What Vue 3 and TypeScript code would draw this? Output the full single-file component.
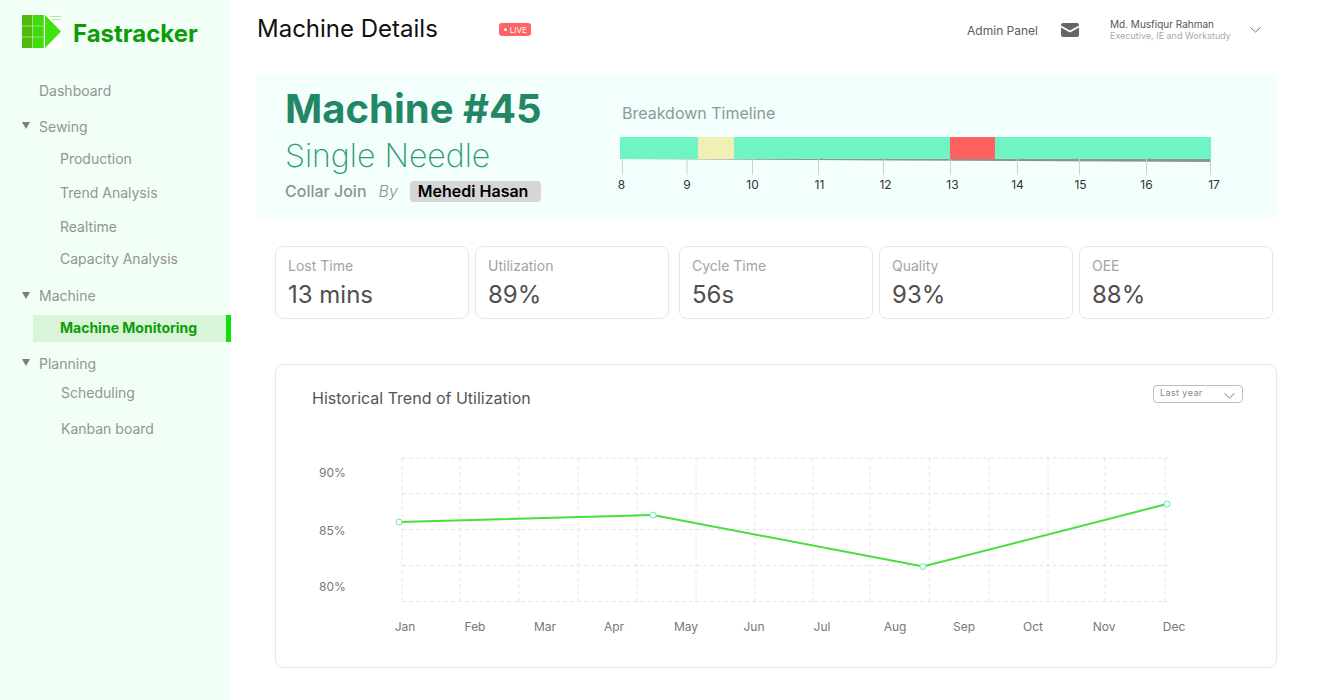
<script setup lang="ts">
interface NavItem { label: string; kind: 'top' | 'group' | 'sub' | 'active'; height: number; shift?: number }
const nav: NavItem[] = [
  { label: 'Dashboard', kind: 'top', height: 36 },
  { label: 'Sewing', kind: 'group', height: 36 },
  { label: 'Production', kind: 'sub', height: 28 },
  { label: 'Trend Analysis', kind: 'sub', height: 40 },
  { label: 'Realtime', kind: 'sub', height: 28 },
  { label: 'Capacity Analysis', kind: 'sub', height: 36 },
  { label: 'Machine', kind: 'group', height: 39 },
  { label: 'Machine Monitoring', kind: 'active', height: 27 },
  { label: 'Planning', kind: 'group', height: 42 },
  { label: 'Scheduling', kind: 'sub', height: 16, shift: 1 },
  { label: 'Kanban board', kind: 'sub', height: 56, shift: 1 },
]
const cards = [
  { label: 'Lost Time', value: '13 mins', gap: 0 },
  { label: 'Utilization', value: '89%', gap: 6 },
  { label: 'Cycle Time', value: '56s', gap: 10 },
  { label: 'Quality', value: '93%', gap: 6 },
  { label: 'OEE', value: '88%', gap: 6 },
]
const hours = [
  { h: 8, tick: 622.5, text: 621.5 }, { h: 9, tick: 687, text: 687 }, { h: 10, tick: 752.5, text: 752.5 },
  { h: 11, tick: 818.5, text: 819.5 }, { h: 12, tick: 883.5, text: 885.5 }, { h: 13, tick: 950.5, text: 952.5 },
  { h: 14, tick: 1017.5, text: 1017.5 }, { h: 15, tick: 1079.5, text: 1080.5 }, { h: 16, tick: 1146.5, text: 1146.5 },
  { h: 17, tick: 1210.5, text: 1214 },
]
const segments = [
  { x: 620, w: 78, c: '#6ff5c3' }, { x: 698, w: 36, c: '#f0f0b4' }, { x: 734, w: 216, c: '#6ff5c3' },
  { x: 950, w: 45, c: '#ff6060' }, { x: 995, w: 216, c: '#6ff5c3' },
]
const vLines = [402, 460, 519, 578, 637, 696, 755, 813, 870, 929.5, 989, 1048, 1105, 1165]
const hLines = [458, 493.5, 529.5, 565.5, 601.5]
const yLabels = [{ t: '90%', y: 472 }, { t: '85%', y: 530 }, { t: '80%', y: 586 }]
const xLabels = [
  ['Jan', 405], ['Feb', 475], ['Mar', 545], ['Apr', 614], ['May', 686], ['Jun', 754],
  ['Jul', 822], ['Aug', 895], ['Sep', 964], ['Oct', 1033], ['Nov', 1104], ['Dec', 1174],
] as const
const points = [[399, 522], [653, 515], [923, 566.5], [1167, 504]]
const polyline = points.map((p) => p.join(',')).join(' ')
</script>

<template>
  <div class="page">
    <aside class="sidebar">
      <div class="brand">
        <svg class="logo" width="40" height="34" viewBox="0 0 40 34">
          <rect x="0" y="0" width="39" height="33" fill="#ffffff" />
          <rect x="0" y="0" width="22" height="33" fill="#9fe37f" />
          <rect x="0" y="0" width="10" height="10.5" fill="#4fb90f" />
          <rect x="0" y="11.5" width="10" height="10" fill="#4fb90f" />
          <rect x="0" y="22.5" width="10" height="10.5" fill="#4fb90f" />
          <rect x="11" y="0" width="10.5" height="10.5" fill="#3fdb0b" />
          <rect x="11" y="11.5" width="10.5" height="10" fill="#3fdb0b" />
          <rect x="11" y="22.5" width="10.5" height="10.5" fill="#3fdb0b" />
          <path d="M23 0 L39 16.5 L23 33 Z" fill="#3fe30d" />
          <rect x="28" y="1" width="11" height="1" fill="#b5e6a5" />
          <rect x="30" y="4" width="9" height="1" fill="#b5e6a5" />
        </svg>
        <span class="brand-name">Fastracker</span>
      </div>
      <nav class="nav">
        <div
          v-for="item in nav"
          :key="item.label"
          class="nav-row"
          :class="item.kind"
          :style="{ height: item.height + 'px', paddingLeft: item.shift ? 61 + 'px' : undefined }"
        >
          <svg v-if="item.kind === 'group'" class="caret" width="8" height="7" viewBox="0 0 8 7">
            <path d="M0 0 H8 L4 7 Z" fill="#7d7d7d" />
          </svg>
          <span>{{ item.label }}</span>
        </div>
      </nav>
    </aside>

    <main class="main">
      <header class="topbar">
        <div class="title-wrap">
          <h1 class="title">Machine Details</h1>
          <span class="live"><i class="live-dot"></i>LIVE</span>
        </div>
        <div class="account">
          <span class="admin">Admin Panel</span>
          <svg class="mail" width="18" height="14" viewBox="0 0 18 14">
            <path d="M2 0 H16 A2 2 0 0 1 18 2 V2.6 L9 7.4 L0 2.6 V2 A2 2 0 0 1 2 0 Z" fill="#666" />
            <path d="M0 4.6 L9 9.4 L18 4.6 V12 A2 2 0 0 1 16 14 H2 A2 2 0 0 1 0 12 Z" fill="#666" />
          </svg>
          <div class="user">
            <div class="user-name">Md. Musfiqur Rahman</div>
            <div class="user-role">Executive, IE and Workstudy</div>
          </div>
          <svg class="chev" width="11" height="6" viewBox="0 0 11 6">
            <path d="M0.5 0.5 L5.5 5 L10.5 0.5" fill="none" stroke="#777" stroke-width="1" />
          </svg>
        </div>
      </header>

      <section class="hero">
        <div class="hero-info">
          <div class="machine">Machine #45</div>
          <div class="needle">Single Needle</div>
          <div class="meta">
            <span class="join">Collar Join</span>
            <span class="by">By</span>
            <span class="person">Mehedi Hasan</span>
          </div>
        </div>
        <div class="timeline">
          <div class="timeline-title">Breakdown Timeline</div>
          <svg class="timeline-svg" width="620" height="62" viewBox="612 135 620 62">
            <path d="M620 159 L1211 159 L1211 162 L900 160.5 Z" fill="#909090" />
            <rect v-for="s in segments" :key="s.x" :x="s.x" y="137" :width="s.w" height="22" :fill="s.c" />
            <line v-for="t in hours" :key="t.h" :x1="t.tick" :x2="t.tick" y1="159" y2="175" stroke="#cfcfcf" stroke-width="1" />
            <text v-for="t in hours" :key="'l' + t.h" class="hour" :x="t.text" y="189" text-anchor="middle">{{ t.h }}</text>
          </svg>
        </div>
      </section>

      <section class="cards">
        <div v-for="c in cards" :key="c.label" class="card" :style="{ marginLeft: c.gap + 'px' }">
          <div class="card-label">{{ c.label }}</div>
          <div class="card-value">{{ c.value }}</div>
        </div>
      </section>

      <section class="chart-card">
        <div class="chart-head">
          <h2 class="chart-title">Historical Trend of Utilization</h2>
          <div class="select">
            <span class="select-text">Last year</span>
            <svg width="11" height="6" viewBox="0 0 11 6">
              <path d="M0.5 0.5 L5.5 5 L10.5 0.5" fill="none" stroke="#777" stroke-width="1" />
            </svg>
          </div>
        </div>
        <svg class="chart" width="1000" height="240" viewBox="276 425 1000 240">
          <line v-for="x in vLines" :key="x" :x1="x" :x2="x" y1="458" y2="602" class="grid" />
          <line v-for="y in hLines" :key="y" x1="402" x2="1168" :y1="y" :y2="y" class="grid" />
          <text v-for="l in yLabels" :key="l.t" class="axis" x="319" :y="l.y + 5">{{ l.t }}</text>
          <text v-for="l in xLabels" :key="l[0]" class="axis" :x="l[1]" y="631" text-anchor="middle">{{ l[0] }}</text>
          <polyline :points="polyline" fill="none" stroke="#46df3c" stroke-width="2" />
          <circle v-for="p in points" :key="p[0]" :cx="p[0]" :cy="p[1]" r="3" fill="#ffffff" stroke="#6be8b5" stroke-width="1" />
        </svg>
      </section>
    </main>
  </div>
</template>

<style scoped>
.page {
  display: flex;
  width: 1334px;
  height: 700px;
  overflow: hidden;
  background: #fff;
  font-family: Inter, "Liberation Sans", sans-serif;
}
.sidebar {
  width: 230px;
  flex: none;
  background: #f1fff6;
}
.brand {
  display: flex;
  align-items: center;
  height: 33px;
  margin: 15px 0 0 22px;
}
.logo { flex: none; }
.brand-name {
  margin: 4px 0 0 11px;
  font-size: 24px;
  font-weight: 700;
  color: #0c9c0a;
}
.nav {
  margin-top: 24px;
}
.nav-row {
  position: relative;
  display: flex;
  align-items: center;
  font-size: 14px;
  color: #949494;
  white-space: nowrap;
}
.nav-row.top, .nav-row.group { padding-left: 39px; }
.nav-row.sub { padding-left: 60px; }
.nav-row.active {
  width: 198px;
  margin-left: 33px;
  padding: 0 0 2px 27px;
  box-sizing: border-box;
  background: #d9f4d6;
  color: #0c9c0a;
  font-weight: 700;
  border-right: 5px solid #0fe00a;
}
.caret { position: absolute; left: 22px; top: 50%; margin-top: -4px; }
.main {
  flex: 1;
  min-width: 0;
  padding: 0 57px 0 27px;
}
.topbar {
  display: flex;
  justify-content: space-between;
  height: 74px;
}
.title-wrap {
  display: flex;
  align-items: flex-start;
}
.title {
  margin: 13px 0 0 0;
  font-size: 24px;
  font-weight: 400;
  line-height: 32px;
  color: #111;
}
.live {
  display: flex;
  align-items: center;
  height: 13px;
  margin: 23px 0 0 61px;
  padding: 0 4px 0 5px;
  border-radius: 3px;
  background: #ff6464;
  color: #fff;
  font-size: 8px;
}
.live-dot {
  width: 3px;
  height: 3px;
  margin-right: 3px;
  border-radius: 50%;
  background: #fff;
}
.account {
  display: flex;
  align-items: flex-start;
  padding-right: 16px;
}
.admin {
  margin-top: 23px;
  font-size: 12px;
  line-height: 16px;
  color: #5c5c5c;
}
.mail { margin: 23px 0 0 23px; }
.user { margin: 18px 0 0 31px; width: 130px; }
.user-name { font-size: 10px; line-height: 13px; color: #555; }
.user-role { font-size: 9px; line-height: 10px; color: #aaa; }
.chev { margin-top: 27px; margin-left: 10px; }
.hero {
  display: flex;
  height: 144px;
  width: 1020px;
  background: #f3fffc;
  border-radius: 3px;
}
.hero-info { width: 365px; padding: 11px 0 0 28px; box-sizing: border-box; }
.machine {
  font-size: 40px;
  font-weight: 700;
  line-height: 48px;
  color: #238763;
}
.needle {
  margin-top: 2px;
  font-size: 32px;
  font-weight: 200;
  line-height: 42px;
  color: #2b9a72;
}
.meta {
  display: flex;
  align-items: center;
  height: 22px;
  margin-top: 3px;
}
.join { font-size: 16px; font-weight: 500; color: #919191; }
.by { margin-left: 12px; font-size: 16px; font-weight: 300; font-style: italic; color: #8f8f8f; }
.person {
  margin-left: 12px;
  width: 131px;
  height: 21px;
  box-sizing: border-box;
  padding-left: 8px;
  line-height: 21px;
  border-radius: 4px;
  background: #d6d6d6;
  color: #000;
  font-size: 16px;
  font-weight: 600;
}
.timeline { position: relative; flex: 1; }
.timeline-title {
  margin-top: 29px;
  font-size: 16px;
  line-height: 20px;
  color: #8b9a94;
}
.timeline-svg { display: block; margin: 12px 0 0 -10px; }
.hour { font-size: 12px; fill: #333; font-family: Inter, sans-serif; }
.cards {
  display: flex;
  margin: 28px 0 0 18px;
}
.card {
  width: 194px;
  height: 73px;
  box-sizing: border-box;
  padding: 10px 12px 0;
  border: 1px solid #e6e6e6;
  border-radius: 8px;
  background: #fff;
}
.card-label { font-size: 14px; line-height: 17px; color: #a3a3a3; }
.card-value { margin-top: 6px; font-size: 24px; line-height: 29px; color: #4f4f4f; }
.chart-card {
  position: relative;
  width: 1002px;
  height: 304px;
  margin: 45px 0 0 18px;
  box-sizing: border-box;
  border: 1px solid #e6e6e6;
  border-radius: 8px;
}
.chart-head {
  display: flex;
  justify-content: space-between;
  align-items: flex-start;
  box-sizing: border-box;
  height: 60px;
  padding: 24px 33px 0 36px;
}
.chart-title {
  margin: 0;
  font-size: 16px;
  font-weight: 400;
  line-height: 19px;
  color: #555;
}
.select {
  display: flex;
  align-items: center;
  justify-content: space-between;
  width: 90px;
  height: 18px;
  box-sizing: border-box;
  margin-top: -4px;
  padding: 0 7px 0 6px;
  border: 1px solid #bdbdbd;
  border-radius: 4px;
  font-size: 9px;
  letter-spacing: 0.4px;
  color: #888;
}
.select-text { margin-top: -3px; }
.select svg { margin-top: 3px; }
.chart { display: block; }
.grid { stroke: #e6e6e6; stroke-width: 1; stroke-dasharray: 4 3; }
.axis { font-size: 12px; fill: #777; font-family: Inter, sans-serif; }
</style>

<style>
html, body { margin: 0; background: #fff; }
</style>
